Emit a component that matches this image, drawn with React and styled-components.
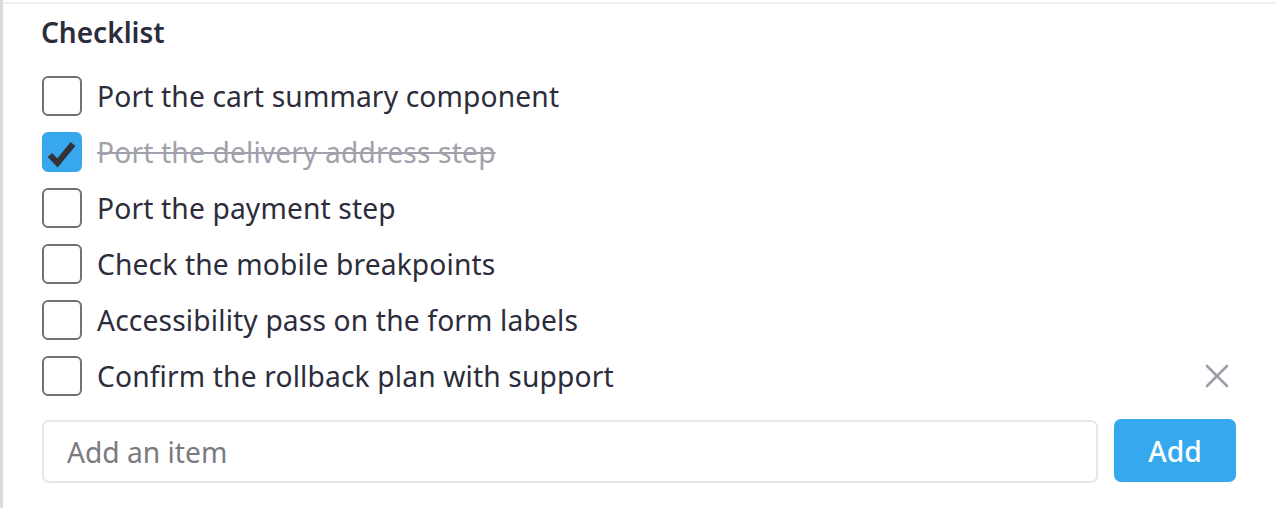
import React, { useState } from "react";
import styled, { createGlobalStyle } from "styled-components";

const Global = createGlobalStyle`
  html, body { margin: 0; padding: 0; background: #ffffff; }
  body { font-family: "Noto Sans", "Open Sans", sans-serif; }
  * { box-sizing: border-box; }
`;

const Page = styled.div`
  display: flex;
  width: 1276px;
  height: 508px;
  overflow: hidden;
  background: #ffffff;
`;

const SideStrip = styled.div`
  width: 3px;
  flex: none;
  background: #d9d9e0;
`;

const Panel = styled.div`
  flex: 1;
  margin-top: 2px;
  border-top: 2px solid #efeff4;
  padding: 10px 40px 0 39px;
  display: flex;
  flex-direction: column;
`;

const Title = styled.h3`
  margin: 0 0 18px -1px;
  font-size: 28px;
  font-weight: 600;
  color: #2b2d3b;
  line-height: 36px;
`;

const List = styled.ul`
  list-style: none;
  margin: 0;
  padding: 0;
`;

const Row = styled.li`
  display: flex;
  align-items: center;
  height: 56px;
  gap: 15px;
`;

const Box = styled.span`
  width: 40px;
  height: 40px;
  flex: none;
  border-radius: 6px;
  border: 2px solid ${(p) => (p.$checked ? "#38a8ee" : "#727272")};
  background: ${(p) => (p.$checked ? "#38a8ee" : "#ffffff")};
  display: flex;
  align-items: center;
  justify-content: center;
  cursor: pointer;
`;

const Label = styled.span`
  flex: 1;
  font-size: 28.2px;
  letter-spacing: 0.15px;
  color: ${(p) => (p.$checked ? "#a1a1ab" : "#2b2d3b")};
  text-decoration: ${(p) => (p.$checked ? "line-through" : "none")};
  text-decoration-thickness: 2px;
  white-space: nowrap;
`;

const Remove = styled.button`
  border: none;
  background: none;
  padding: 0;
  margin-right: 4px;
  width: 30px;
  height: 30px;
  display: flex;
  align-items: center;
  justify-content: center;
  cursor: pointer;
`;

const AddRow = styled.form`
  display: flex;
  gap: 16px;
  margin-top: 16px;
`;

const Input = styled.input`
  flex: 1;
  height: 63px;
  border: 2px solid #e6e6ec;
  border-radius: 7px;
  padding: 0 23px;
  font-family: "Noto Sans", "Open Sans", sans-serif;
  font-size: 28.2px;
  color: #2b2d3b;
  outline: none;
  &::placeholder { color: #7a7a7f; }
`;

const AddButton = styled.button`
  width: 122px;
  height: 63px;
  margin-top: -1px;
  border: none;
  border-radius: 7px;
  background: #36a9ee;
  color: #ffffff;
  font-family: "Noto Sans", "Open Sans", sans-serif;
  font-size: 28.2px;
  font-weight: 500;
  cursor: pointer;
`;

const Check = () => (
  <svg width="36" height="36" viewBox="0 0 36 36">
    <path d="M6 21 L13.5 29 L29 10" fill="none" stroke="#333338" strokeWidth="6" strokeLinecap="butt" strokeLinejoin="miter" />
  </svg>
);

const Cross = () => (
  <svg width="24" height="24" viewBox="0 0 24 24">
    <path d="M2 2 L22 22 M22 2 L2 22" stroke="#9d9daa" strokeWidth="2.6" strokeLinecap="round" />
  </svg>
);

const initial = [
  { text: "Port the cart summary component", done: false },
  { text: "Port the delivery address step", done: true },
  { text: "Port the payment step", done: false },
  { text: "Check the mobile breakpoints", done: false },
  { text: "Accessibility pass on the form labels", done: false },
  { text: "Confirm the rollback plan with support", done: false },
];

export default function App() {
  const [items, setItems] = useState(initial);
  const toggle = (i) =>
    setItems((list) => list.map((it, j) => (j === i ? { ...it, done: !it.done } : it)));
  return (
    <>
      <Global />
      <Page>
        <SideStrip />
        <Panel>
          <Title>Checklist</Title>
          <List>
            {items.map((it, i) => (
              <Row key={i}>
                <Box $checked={it.done} onClick={() => toggle(i)}>
                  {it.done && <Check />}
                </Box>
                <Label $checked={it.done}>{it.text}</Label>
                {i === items.length - 1 && (
                  <Remove type="button" aria-label="Remove">
                    <Cross />
                  </Remove>
                )}
              </Row>
            ))}
          </List>
          <AddRow onSubmit={(e) => e.preventDefault()}>
            <Input placeholder="Add an item" />
            <AddButton type="submit">Add</AddButton>
          </AddRow>
        </Panel>
      </Page>
    </>
  );
}
